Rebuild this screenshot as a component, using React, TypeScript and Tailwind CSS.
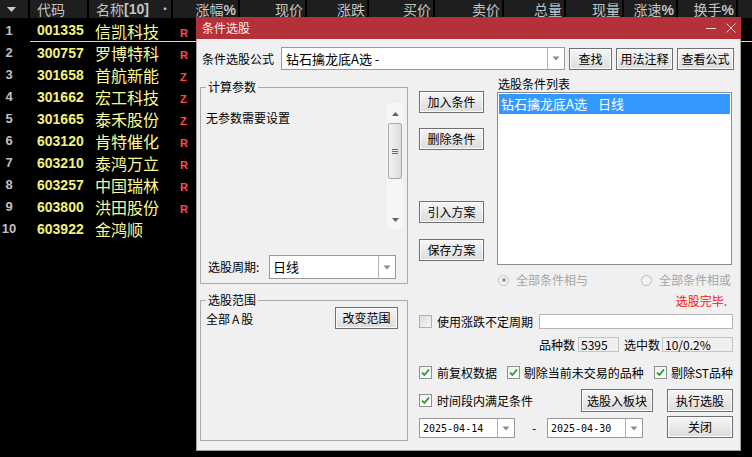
import React from 'react';

interface Stock {
    no: number;
    code: string;
    name: string;
    tag: string;
}

const stocks: Stock[] = [
    { no: 1, code: '001335', name: '信凯科技', tag: 'R' },
    { no: 2, code: '300757', name: '罗博特科', tag: 'R' },
    { no: 3, code: '301658', name: '首航新能', tag: 'Z' },
    { no: 4, code: '301662', name: '宏工科技', tag: 'Z' },
    { no: 5, code: '301665', name: '泰禾股份', tag: 'Z' },
    { no: 6, code: '603120', name: '肯特催化', tag: 'R' },
    { no: 7, code: '603210', name: '泰鸿万立', tag: 'R' },
    { no: 8, code: '603257', name: '中国瑞林', tag: 'R' },
    { no: 9, code: '603800', name: '洪田股份', tag: 'R' },
    { no: 10, code: '603922', name: '金鸿顺', tag: '' },
];

const headCols = [
    { label: '涨幅%', w: 'w-[67px]' },
    { label: '现价', w: 'w-[67px]' },
    { label: '涨跌', w: 'w-[62px]' },
    { label: '买价', w: 'w-[66px]' },
    { label: '卖价', w: 'w-[69px]' },
    { label: '总量', w: 'w-[62px]' },
    { label: '现量', w: 'w-[58px]' },
    { label: '涨速%', w: 'w-[54px]' },
    { label: '换手%', w: 'w-[60px]' },
];

function Btn({ className, children }: { className: string; children: React.ReactNode }) {
    return (
        <div
            className={`flex items-center justify-center whitespace-nowrap border border-[#707070] bg-linear-to-b from-[#f6f6f6] to-[#dcdcdc] text-[12px] leading-[14px] text-black shadow-[inset_0_0_0_1px_#fbfbfb] ${className}`}
        >
            {children}
        </div>
    );
}

function Arrow() {
    return (
        <svg width="8" height="5" viewBox="0 0 8 5">
            <path d="M0.5 0.5 L7.5 0.5 L4 4.5 Z" fill="#8a8a8a" />
        </svg>
    );
}

function Combo({ className, text, textClass }: { className: string; text: string; textClass: string }) {
    return (
        <div className={`flex border border-[#9a9a9a] bg-white ${className}`}>
            <div className={`flex flex-1 items-center overflow-hidden whitespace-nowrap ${textClass}`}>{text}</div>
            <div className="flex w-[17px] items-center justify-center border-l border-[#b4b4b4]">
                <Arrow />
            </div>
        </div>
    );
}

function Check({ checked, disabled }: { checked?: boolean; disabled?: boolean }) {
    if (disabled) {
        return <div className="h-[13px] w-[13px] shrink-0 border border-[#b1b1b1] bg-linear-to-br from-[#dcdcdc] to-[#f8f8f8]" />;
    }
    return (
        <div className="flex h-[13px] w-[13px] shrink-0 items-center justify-center border border-[#8e8f8f] bg-linear-to-br from-[#f0f0f0] to-white">
            {checked && (
                <svg width="11" height="11" viewBox="0 0 11 11">
                    <path d="M2 5.5 L4.4 8 L9 2.5" fill="none" stroke="#1f9a1f" strokeWidth="1.8" />
                </svg>
            )}
        </div>
    );
}

function Radio({ checked }: { checked?: boolean }) {
    return (
        <div className="flex h-[11px] w-[11px] shrink-0 items-center justify-center rounded-full border border-[#bcbcbc] bg-[#f4f4f4]">
            {checked && <div className="h-[4px] w-[4px] rounded-full bg-[#9a9a9a]" />}
        </div>
    );
}

function Scrollbar() {
    return (
        <div className="flex w-[16px] flex-col items-center bg-[#f6f6f6]">
            <svg className="mt-[9px]" width="7" height="4" viewBox="0 0 7 4">
                <path d="M0 4 L7 4 L3.5 0 Z" fill="#606060" />
            </svg>
            <div className="mt-[7px] flex h-[56px] w-[14px] flex-col items-center justify-center gap-[1px] rounded-[2px] border border-[#a7a7a7] bg-linear-to-r from-[#f2f2f2] to-[#dcdcdc]">
                <div className="h-[1px] w-[6px] bg-[#6a6a6a]" />
                <div className="h-[1px] w-[6px] bg-[#6a6a6a]" />
                <div className="h-[1px] w-[6px] bg-[#6a6a6a]" />
            </div>
            <svg className="mb-[7px] mt-auto" width="7" height="4" viewBox="0 0 7 4">
                <path d="M0 0 L7 0 L3.5 4 Z" fill="#606060" />
            </svg>
        </div>
    );
}

export default function App() {
    return (
        <div className="relative h-[457px] w-[752px] overflow-hidden bg-black font-['Noto_Sans_CJK_SC',sans-serif]">
            {/* quote list header */}
            <div className="flex h-[18px] bg-[#1e1e1e] text-[14px] leading-[18px] text-[#c4c4c4]">
                <div className="flex w-[30px] items-center border-r-2 border-black pl-[7px]">
                    <svg width="9" height="5" viewBox="0 0 9 5">
                        <path d="M0 0 L9 0 L4.5 5 Z" fill="#c8c8c8" />
                    </svg>
                </div>
                <div className="w-[59px] border-r-2 border-black pl-[7px]">代码</div>
                <div className="flex w-[84px] border-r-2 border-black pl-[7px]">
                    <span>名称</span>
                    <span className="font-['Liberation_Sans'] font-bold">[10]</span>
                    <span className="ml-[10px] text-[12px]">•</span>
                </div>
                {headCols.map((c) => (
                    <div key={c.label} className={`${c.w} border-r-2 border-black pr-[2px] text-right`}>
                        {c.label.replace('%', '')}
                        {c.label.endsWith('%') && <span className="font-['Liberation_Sans'] font-bold">%</span>}
                    </div>
                ))}
                <div className="flex-1" />
            </div>

            {/* quote rows */}
            <div className="mt-[2px] flex flex-col">
                {stocks.map((s) => (
                    <div key={s.no} className="flex h-[22px]">
                        <div className="flex w-[30px] items-center">
                            <span className="w-[18px] text-center font-['Liberation_Sans'] text-[13px] font-bold text-[#c0c0c0]">{s.no}</span>
                        </div>
                        <div className={`flex flex-1 items-center pl-[7px] ${s.no === 1 ? 'border-b border-[#e6e66a]' : ''}`}>
                            <span className="w-[54px] font-['Liberation_Sans'] text-[14px] font-bold text-[#f2f27c]">{s.code}</span>
                            <span className="w-[89px] pl-[4px] text-[16px] leading-[20px] text-[#fafa96]">{s.name}</span>
                            <span className="pt-[5px] font-['Liberation_Sans'] text-[11px] font-bold text-[#ff4b4b]">{s.tag}</span>
                        </div>
                    </div>
                ))}
            </div>

            {/* dialog window */}
            <div className="absolute left-[196px] top-[17px] flex h-[434px] w-[545px] flex-col text-[12px] text-black">
                <div className="flex h-[22px] items-center justify-between bg-[#b5313a] pl-[6px] pr-[5px] leading-[14px] text-[#fbeaea]">
                    <span>条件选股</span>
                    <div className="flex items-center gap-[10px]">
                        <svg width="10" height="10" viewBox="0 0 10 10">
                            <path d="M0 5.5 L10 5.5" stroke="#f3d6d6" strokeWidth="1" />
                        </svg>
                        <svg width="10" height="10" viewBox="0 0 10 10">
                            <path d="M0.5 0.5 L9.5 9.5 M9.5 0.5 L0.5 9.5" stroke="#f3d6d6" strokeWidth="1" />
                        </svg>
                    </div>
                </div>

                <div className="flex flex-1 flex-col border-x border-b border-[#a0a0a0] bg-[#f0f0f0]">
                    {/* formula row */}
                    <div className="mt-[8px] flex h-[23px] items-center pl-[5px]">
                        <span className="w-[79px] leading-[14px]">条件选股公式</span>
                        <Combo className="h-[23px] w-[284px]" text="钻石擒龙底A选 -" textClass="pl-[4px] text-[13px]" />
                        <Btn className="ml-[4px] h-[22px] w-[43px]">查找</Btn>
                        <Btn className="ml-[4px] h-[22px] w-[57px]">用法注释</Btn>
                        <Btn className="ml-[4px] h-[22px] w-[57px]">查看公式</Btn>
                    </div>

                    <div className="mt-[7px] flex pl-[3px]">
                        {/* left column */}
                        <div className="flex w-[208px] flex-col pt-[3px]">
                            <fieldset className="h-[204px] w-[208px] border border-[#a9a9a9] px-[3px]">
                                <legend className="ml-[2px] px-[2px] leading-[14px]">计算参数</legend>
                                <div className="mt-[9px] flex h-[126px] w-[199px]">
                                    <div className="flex-1 pl-[2px] pt-[7px] leading-[16px]">无参数需要设置</div>
                                    <Scrollbar />
                                </div>
                                <div className="mt-[26px] flex items-center">
                                    <span className="ml-[4px] w-[61px] leading-[14px]">选股周期:</span>
                                    <Combo className="h-[24px] w-[127px]" text="日线" textClass="pl-[3px] text-[13px]" />
                                </div>
                            </fieldset>
                            <fieldset className="mt-[9px] h-[148px] w-[208px] border border-[#a9a9a9] px-[3px]">
                                <legend className="ml-[2px] px-[2px] leading-[14px]">选股范围</legend>
                                <div className="flex items-start justify-between pr-[6px]">
                                    <span className="mt-[4px] pl-[2px] leading-[16px]">
                                        全部<span className="px-[2px]">A</span>股
                                    </span>
                                    <Btn className="h-[22px] w-[63px]">改变范围</Btn>
                                </div>
                            </fieldset>
                        </div>

                        {/* right area */}
                        <div className="ml-[11px] flex w-[314px] flex-col whitespace-nowrap">
                            <div className="flex">
                                <div className="flex w-[65px] flex-col">
                                    <Btn className="mt-[14px] h-[22px]">加入条件</Btn>
                                    <Btn className="mt-[15px] h-[22px]">删除条件</Btn>
                                    <Btn className="mt-[51px] h-[22px]">引入方案</Btn>
                                    <Btn className="mt-[16px] h-[22px]">保存方案</Btn>
                                </div>
                                <div className="ml-[13px] flex w-[235px] flex-col">
                                    <div className="pl-[1px] leading-[14px]">选股条件列表</div>
                                    <div className="mt-[1px] h-[173px] border border-[#8c8c8c] bg-white p-[1px]">
                                        <div className="flex h-[20px] bg-[#3399ff] pl-[2px] text-[13px] leading-[20px] text-white">
                                            <span>钻石擒龙底A选</span>
                                            <span className="ml-[11px]">日线</span>
                                        </div>
                                    </div>
                                    <div className="mt-[8px] flex h-[14px] items-center text-[#a6a6a6]">
                                        <div className="ml-[1px]">
                                            <Radio checked />
                                        </div>
                                        <span className="ml-[7px] leading-[14px]">全部条件相与</span>
                                        <div className="ml-[53px]">
                                            <Radio />
                                        </div>
                                        <span className="ml-[7px] leading-[14px]">全部条件相或</span>
                                    </div>
                                    <div className="mt-[7px] pr-[5px] text-right leading-[14px] text-[#ff1010]">选股完毕.</div>
                                </div>
                            </div>

                            <div className="mt-[6px] flex h-[15px] items-center">
                                <Check disabled />
                                <span className="ml-[5px] w-[96px] leading-[14px]">使用涨跌不定周期</span>
                                <div className="ml-[6px] h-[15px] flex-1 border border-[#b5b5b5] bg-white" />
                            </div>

                            <div className="mt-[8px] flex h-[15px] items-center justify-end">
                                <span className="leading-[14px]">品种数</span>
                                <div className="ml-[3px] h-[15px] w-[41px] border border-[#c4c4c4] pl-[2px] leading-[13px]">5395</div>
                                <span className="ml-[5px] leading-[14px]">选中数</span>
                                <div className="ml-[2px] h-[15px] w-[71px] border border-[#c4c4c4] pl-[2px] leading-[13px]">10/0.2%</div>
                            </div>

                            <div className="mt-[14px] flex h-[13px] items-center">
                                <Check checked />
                                <span className="ml-[5px] w-[70px] leading-[14px]">前复权数据</span>
                                <Check checked />
                                <span className="ml-[4px] w-[131px] leading-[14px]">剔除当前未交易的品种</span>
                                <Check checked />
                                <span className="ml-[4px] leading-[14px]">剔除ST品种</span>
                            </div>

                            <div className="mt-[10px] flex h-[23px] items-center">
                                <Check checked />
                                <span className="ml-[5px] leading-[14px]">时间段内满足条件</span>
                                <Btn className="ml-[48px] h-[23px] w-[72px]">选股入板块</Btn>
                                <Btn className="ml-[14px] h-[23px] w-[66px]">执行选股</Btn>
                            </div>

                            <div className="mt-[4px] flex items-end">
                                <Combo className="h-[20px] w-[96px]" text="2025-04-14" textClass="pl-[3px] font-['DejaVu_Sans_Mono'] text-[10px]" />
                                <span className="mb-[3px] ml-[17px] w-[15px] leading-[14px]">-</span>
                                <Combo className="h-[20px] w-[96px]" text="2025-04-30" textClass="pl-[3px] font-['DejaVu_Sans_Mono'] text-[10px]" />
                                <Btn className="ml-[24px] h-[22px] w-[66px]">关闭</Btn>
                            </div>
                        </div>
                    </div>
                </div>
            </div>
        </div>
    );
}
